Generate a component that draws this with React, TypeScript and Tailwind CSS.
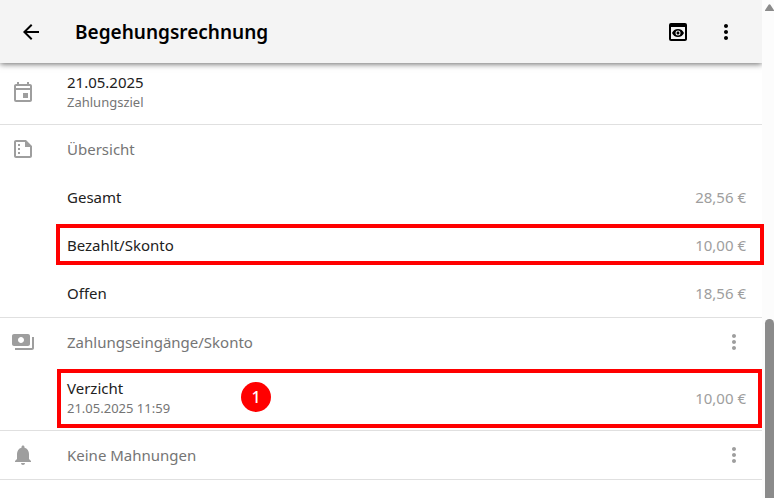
import type { ReactNode } from "react";
import {
  MdArrowBack,
  MdMoreVert,
  MdNotifications,
  MdOutlineEvent,
  MdPayments,
  MdPreview,
} from "react-icons/md";

const amounts = [
  { label: "Gesamt", value: "28,56 €" },
  { label: "Bezahlt/Skonto", value: "10,00 €", marked: true },
  { label: "Offen", value: "18,56 €" },
];

function SummaryIcon() {
  return (
    <svg viewBox="0 0 24 24" className="size-6" fill="currentColor" aria-hidden="true">
      <path
        fillRule="evenodd"
        d="M15 3H5c-1.100 0-2 .9-2 2v14c0 1.100.9 2 2 2h14c1.100 0 2-.9 2-2V9l-6-6zM5 19V5h9v5h5v9H5z"
      />
      <path d="M7 7h2v2H7zM7 11h2v2H7zM7 15h2v2H7z" />
    </svg>
  );
}

function Section({ icon, children }: { icon: ReactNode; children: ReactNode }) {
  return (
    <section className="flex border-b border-[#e0e0e0]">
      <div className="flex h-12 w-[67px] shrink-0 items-center pl-[11px] text-[#9e9e9e]">{icon}</div>
      <div className="min-w-0 flex-1">{children}</div>
    </section>
  );
}

function SectionHeader({ title, menu }: { title: string; menu?: boolean }) {
  return (
    <div className="flex h-12 items-center justify-between pr-4">
      <h2 className="text-[#757575]">{title}</h2>
      {menu && (
        <button type="button" aria-label={`Menü ${title}`} className="text-[#9e9e9e]">
          <MdMoreVert className="size-6" />
        </button>
      )}
    </div>
  );
}

export default function App() {
  return (
    <div className="flex h-screen overflow-hidden bg-white font-['Noto_Sans','Open_Sans',sans-serif] text-[15px] leading-5 text-[#212121]">
      <div className="min-w-0 flex-1">
        <header className="relative flex h-[63px] items-center bg-[#f4f4f4] pr-6 pl-[19px] text-black shadow-[0_1px_6px_rgba(0,0,0,0.6)]">
          <button type="button" aria-label="Zurück">
            <MdArrowBack className="size-6" />
          </button>
          <h1 className="ml-8 flex-1 text-[19px] leading-6 font-semibold">Begehungsrechnung</h1>
          <button type="button" aria-label="Vorschau" className="mr-6">
            <MdPreview className="size-6" />
          </button>
          <button type="button" aria-label="Menü">
            <MdMoreVert className="size-6" />
          </button>
        </header>

        <main>
          <Section icon={<MdOutlineEvent className="mt-2.5 size-6" />}>
            <div className="pt-[9px] pb-3">
              <p>21.05.2025</p>
              <p className="text-[13px] text-[#757575]">Zahlungsziel</p>
            </div>
          </Section>

          <Section icon={<SummaryIcon />}>
            <SectionHeader title="Übersicht" />
            <dl>
              {amounts.map((row) => (
                <div key={row.label} className="relative flex h-12 items-center justify-between pr-4">
                  <dt>{row.label}</dt>
                  <dd className="text-[#9e9e9e]">{row.value}</dd>
                  {row.marked && (
                    <div className="absolute top-[3px] -right-[2px] bottom-1 -left-[11px] z-10 border-4 border-[#ff0000]" />
                  )}
                </div>
              ))}
            </dl>
          </Section>

          <Section icon={<MdPayments className="size-6" />}>
            <SectionHeader title="Zahlungseingänge/Skonto" menu />
            <div className="relative flex h-16 items-center justify-between pr-4">
              <div>
                <p>Verzicht</p>
                <p className="text-[13px] text-[#757575]">21.05.2025 11:59</p>
              </div>
              <span className="text-[#9e9e9e]">10,00 €</span>
              <div className="absolute top-[3px] right-0 bottom-[2px] -left-[10px] border-4 border-[#ff0000]" />
              <span className="absolute top-4 left-[174px] flex size-[30px] items-center justify-center rounded-full bg-[#ff0000] text-base font-medium text-white">
                1
              </span>
            </div>
          </Section>

          <Section icon={<MdNotifications className="size-6" />}>
            <SectionHeader title="Keine Mahnungen" menu />
          </Section>
        </main>
      </div>

      <div className="relative flex w-3 shrink-0 flex-col items-end bg-[#fcfcfc]" aria-hidden="true">
        <svg viewBox="0 0 9 8" className="mt-1 h-2 w-[9px]" fill="#8b8b8b">
          <path d="M3.6.8a1 1 0 0 1 1.8 0L9 6.2Q9.200 7 8.500 7H.5Q-.2 7 0 6.200z" />
        </svg>
        <div className="mt-[307px] w-[9px] flex-1 rounded-t-full bg-[#8b8b8b]" />
      </div>
    </div>
  );
}
